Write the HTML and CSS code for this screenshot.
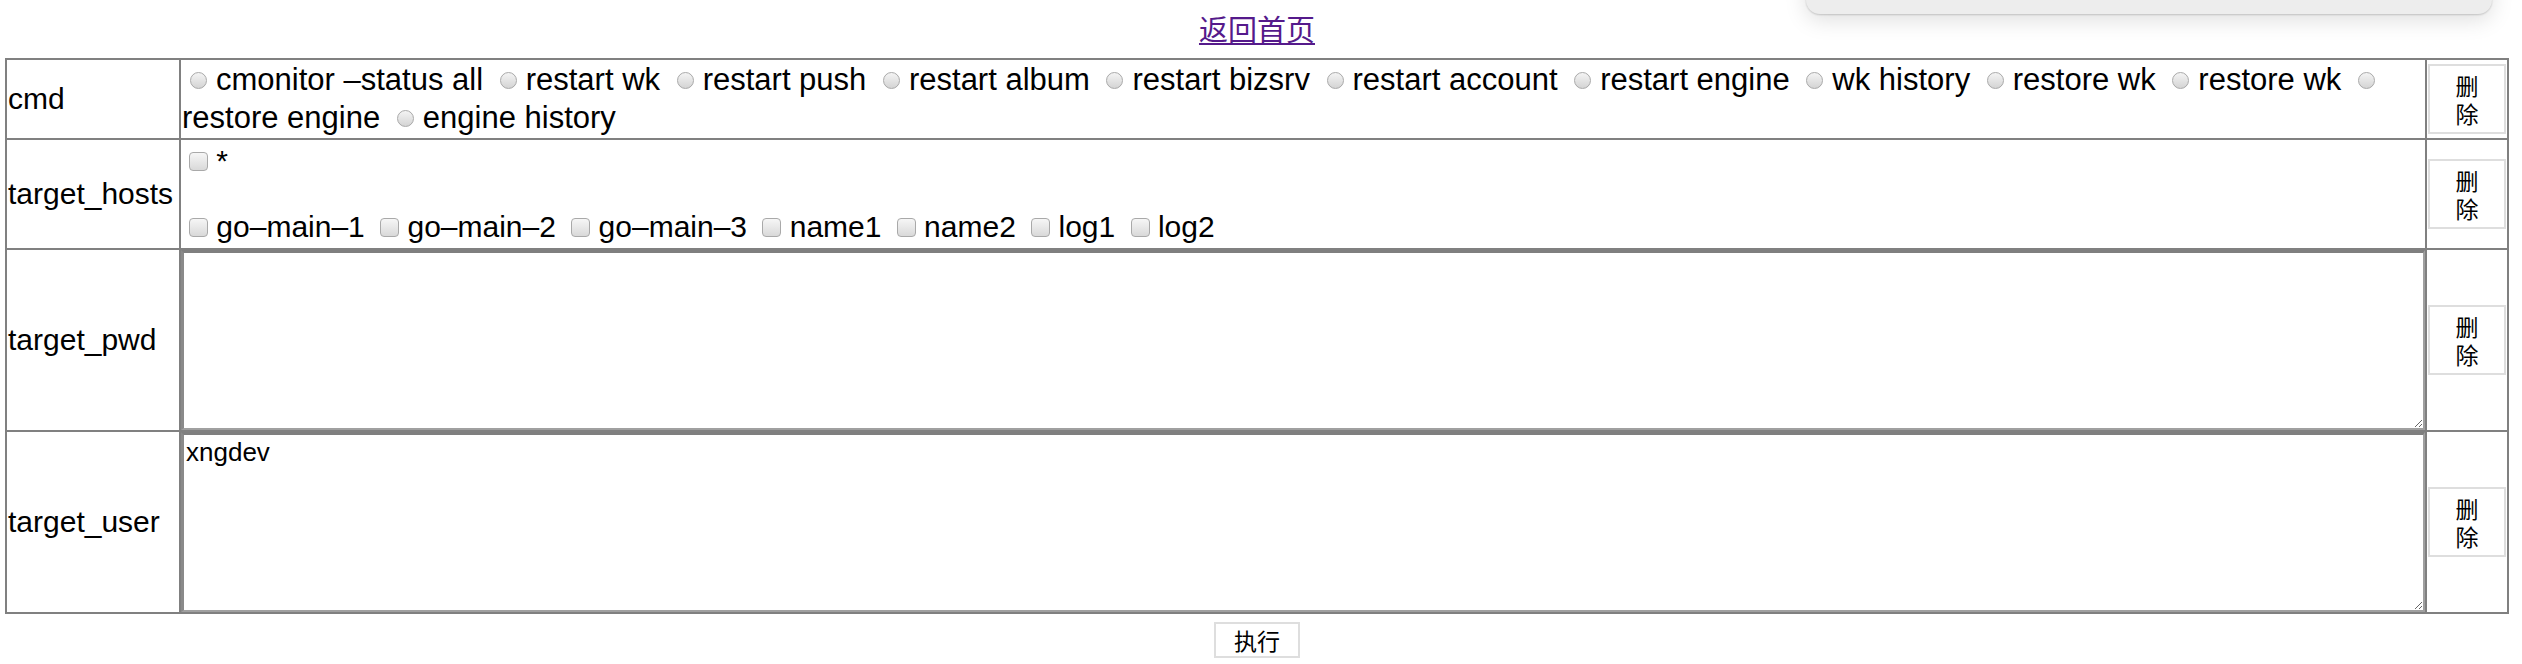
FILE: index.html
```html
<!DOCTYPE html>
<html lang="zh-CN">
<head>
<meta charset="utf-8">
<title>执行命令</title>
<link rel="stylesheet" href="styles.css">
</head>
<body>
<div class="popup"></div>
<div class="page">
  <div class="nav"><a class="home" href="#">返回首页</a></div>
  <table class="form">
    <colgroup>
      <col class="c-label">
      <col>
      <col class="c-del">
    </colgroup>
    <tr class="r-cmd">
      <td class="label">cmd</td>
      <td class="opts radios"><input type="radio" name="cmd" class="rd">cmonitor –status all <input type="radio" name="cmd" class="rd">restart wk <input type="radio" name="cmd" class="rd">restart push <input type="radio" name="cmd" class="rd">restart album <input type="radio" name="cmd" class="rd">restart bizsrv <input type="radio" name="cmd" class="rd">restart account <input type="radio" name="cmd" class="rd">restart engine <input type="radio" name="cmd" class="rd">wk history <input type="radio" name="cmd" class="rd">restore wk <input type="radio" name="cmd" class="rd">restore wk <input type="radio" name="cmd" class="rd">restore engine <input type="radio" name="cmd" class="rd">engine history</td>
      <td class="del"><button class="btn-del">删除</button></td>
    </tr>
    <tr class="r-hosts">
      <td class="label">target_hosts</td>
      <td class="opts">
        <div class="hline"><input type="checkbox" class="cb"> *</div>
        <div class="hline second"><input type="checkbox" class="cb"> go–main–1 <input type="checkbox" class="cb"> go–main–2 <input type="checkbox" class="cb"> go–main–3 <input type="checkbox" class="cb"> name1 <input type="checkbox" class="cb"> name2 <input type="checkbox" class="cb"> log1 <input type="checkbox" class="cb"> log2</div>
      </td>
      <td class="del"><button class="btn-del">删除</button></td>
    </tr>
    <tr class="r-text">
      <td class="label">target_pwd</td>
      <td class="area"><textarea class="ta"></textarea></td>
      <td class="del"><button class="btn-del">删除</button></td>
    </tr>
    <tr class="r-text">
      <td class="label">target_user</td>
      <td class="area"><textarea class="ta">xngdev</textarea></td>
      <td class="del"><button class="btn-del">删除</button></td>
    </tr>
  </table>
  <div class="actions"><button class="btn-run">执行</button></div>
</div>
</body>
</html>
```
FILE: styles.css
```css
* { box-sizing: border-box; }

body {
  margin: 0;
  background: #ffffff;
  color: #000000;
  font-family: "Liberation Sans", "Noto Sans CJK SC", sans-serif;
  font-size: 30px;
}

.page {
  width: 2509px;
  padding-left: 5px;
}

.nav {
  text-align: center;
  padding-top: 8px;
  line-height: 40px;
  height: 48px;
  margin-bottom: 10px;
}

.home {
  color: #551a8b;
  text-decoration: underline;
  font-family: "Noto Sans CJK SC", sans-serif;
  font-size: 29px;
}

.form {
  width: 2504px;
  table-layout: fixed;
  border-collapse: separate;
  border-spacing: 0;
  border: 1px solid #808080;
}

.c-label { width: 174px; }
.c-del { width: 82px; }

.form td {
  border: 1px solid #808080;
  padding: 1px;
  vertical-align: middle;
}

.r-cmd td { height: 80px; }
.r-hosts td { height: 110px; }
.r-text td { height: 182px; }

.label {
  white-space: nowrap;
  line-height: 36px;
}

.opts {
  line-height: 38px;
}

.radios {
  font-size: 31px;
}

.hline {
  line-height: 36px;
}

.hline.second {
  margin-top: 30px;
}

.rd {
  appearance: none;
  -webkit-appearance: none;
  width: 17px;
  height: 17px;
  margin: 0 9px 1px 8px;
  border: 1px solid #a9a9a9;
  border-radius: 50%;
  background: linear-gradient(#f4f4f4, #d4d4d4);
  vertical-align: baseline;
}

.cb {
  appearance: none;
  -webkit-appearance: none;
  width: 19px;
  height: 19px;
  margin: 0 0 0 7px;
  border: 1px solid #a9a9a9;
  border-radius: 4px;
  background: linear-gradient(#f6f6f6, #d9d9d9);
  vertical-align: baseline;
}

.form td.area {
  padding: 0;
}

.ta {
  display: block;
  width: 100%;
  height: 180px;
  margin: 0;
  padding: 2px;
  border-style: solid;
  border-width: 3px 2px 2px 3px;
  border-color: #7f7f7f #a0a0a0 #a0a0a0 #8a8a8a;
  font-family: "Liberation Sans", sans-serif;
  font-size: 26px;
  color: #000;
  background: #fff;
}

.btn-del {
  display: block;
  width: 100%;
  padding: 5px 18px;
  border: 2px solid #dedede;
  background: #ffffff;
  color: #000;
  font-family: "Noto Sans CJK SC", sans-serif;
  font-size: 23px;
  line-height: 28px;
  text-align: center;
  word-break: break-all;
}

.actions {
  text-align: center;
  padding-top: 8px;
}

.btn-run {
  padding: 2px 18px;
  border: 2px solid #dedede;
  background: #ffffff;
  color: #000;
  font-family: "Noto Sans CJK SC", sans-serif;
  font-size: 23px;
  line-height: 28px;
}

.popup {
  position: fixed;
  left: 1806px;
  top: -30px;
  width: 686px;
  height: 44px;
  border-radius: 14px;
  background: #ededed;
  box-shadow: 0 6px 22px rgba(0, 0, 0, 0.13), 0 1px 2px rgba(0, 0, 0, 0.18);
}
```
